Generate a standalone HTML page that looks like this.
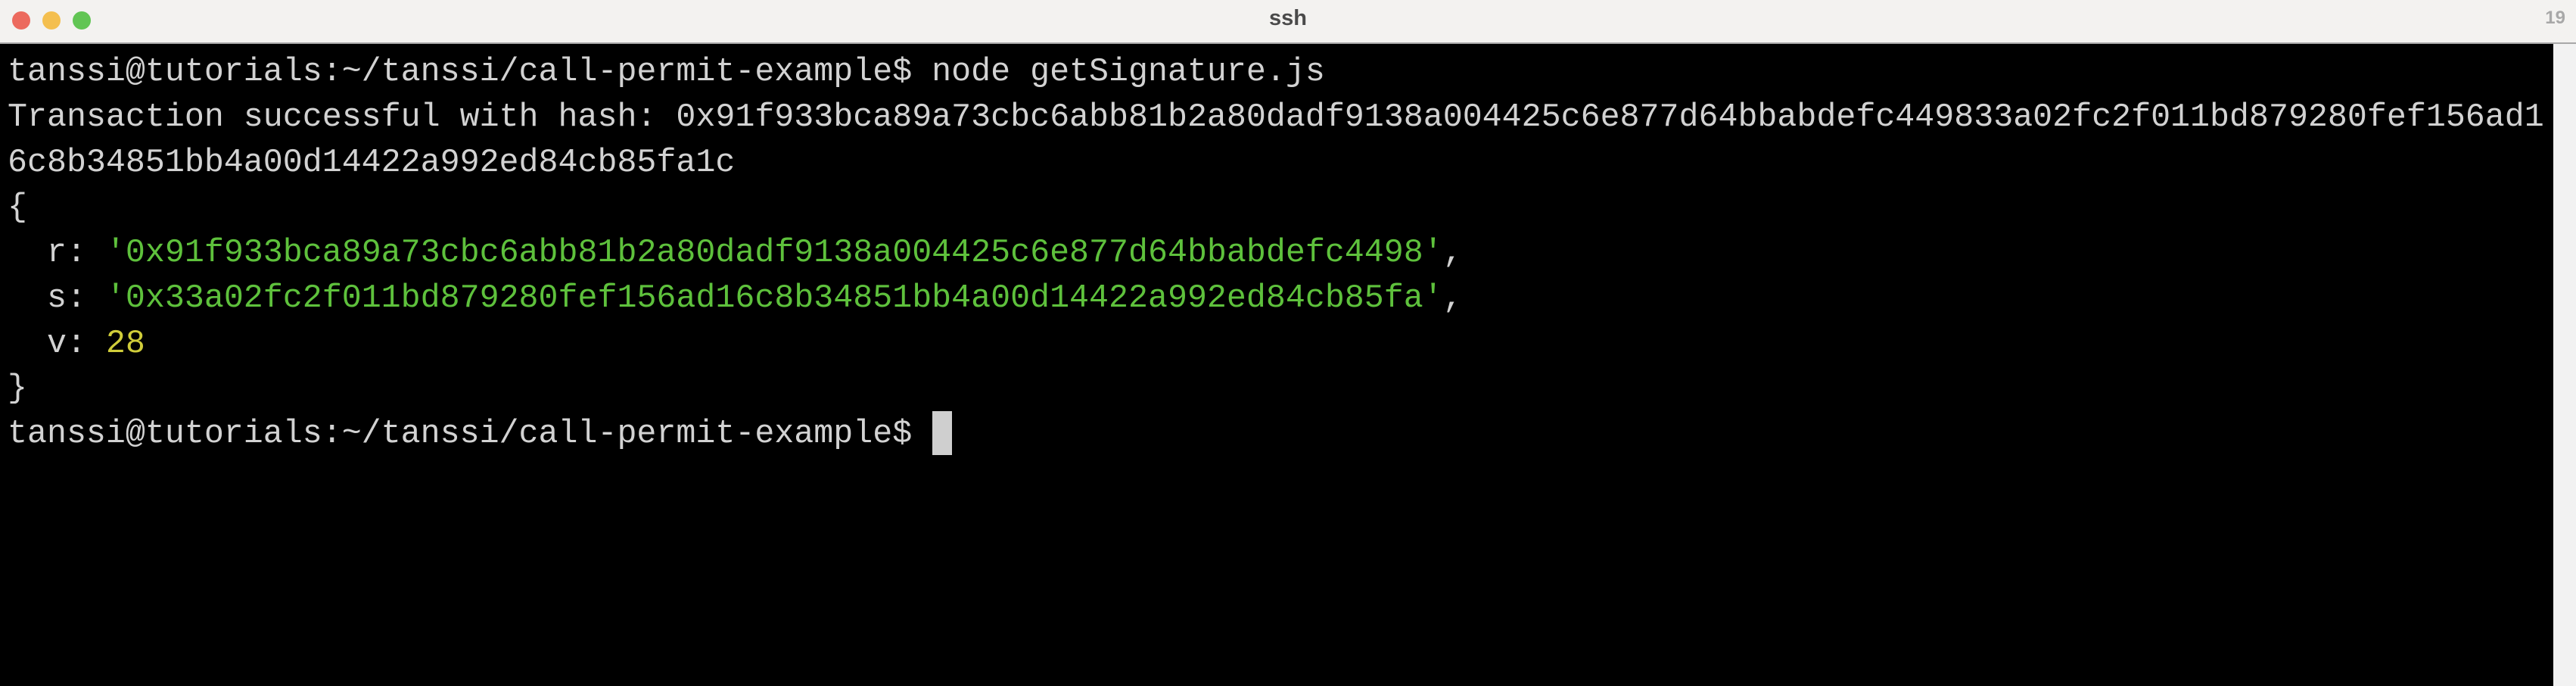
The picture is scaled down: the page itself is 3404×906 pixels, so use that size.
<!DOCTYPE html>
<html><head><meta charset="utf-8"><style>
html,body{margin:0;padding:0;background:#000;}
body{width:3404px;height:906px;position:relative;overflow:hidden;}
.tb{position:absolute;left:0;top:0;width:3404px;height:56px;background:#f3f2f0;border-bottom:2px solid #a8a8a8;}
.dot{position:absolute;top:15px;width:24px;height:24px;border-radius:50%;}
.title{position:absolute;top:8px;left:0;width:3404px;text-align:center;font:bold 29px "Liberation Sans",sans-serif;color:#4a4a4a;}
.num{position:absolute;top:10px;right:14px;font:bold 24px "Liberation Sans",sans-serif;color:#a8a8a8;}
.side{position:absolute;left:3374px;top:58px;width:30px;height:848px;background:#f2f2f2;}
pre{position:absolute;left:10px;top:66px;margin:0;font-family:"Liberation Mono",monospace;font-size:43.3px;line-height:59.75px;color:#d2d2d2;letter-spacing:0;}
.g{color:#5ec13c}.y{color:#d0cd3a}
.cur{position:absolute;left:1232px;top:543px;width:26px;height:58px;background:#cfcfcf;}
</style></head><body>
<div class="tb">
<div class="dot" style="left:16px;background:#ec6a5e;border:0"></div>
<div class="dot" style="left:56px;background:#f4bf4f"></div>
<div class="dot" style="left:96px;background:#61c554"></div>
<div class="title">ssh</div>
<div class="num">19</div>
</div>
<div class="side"></div>
<pre>tanssi@tutorials:~/tanssi/call-permit-example$ node getSignature.js
Transaction successful with hash: 0x91f933bca89a73cbc6abb81b2a80dadf9138a004425c6e877d64bbabdefc449833a02fc2f011bd879280fef156ad1
6c8b34851bb4a00d14422a992ed84cb85fa1c
{
  r: <span class="g">'0x91f933bca89a73cbc6abb81b2a80dadf9138a004425c6e877d64bbabdefc4498'</span>,
  s: <span class="g">'0x33a02fc2f011bd879280fef156ad16c8b34851bb4a00d14422a992ed84cb85fa'</span>,
  v: <span class="y">28</span>
}
tanssi@tutorials:~/tanssi/call-permit-example$ </pre>
<div class="cur"></div>
</body></html>
